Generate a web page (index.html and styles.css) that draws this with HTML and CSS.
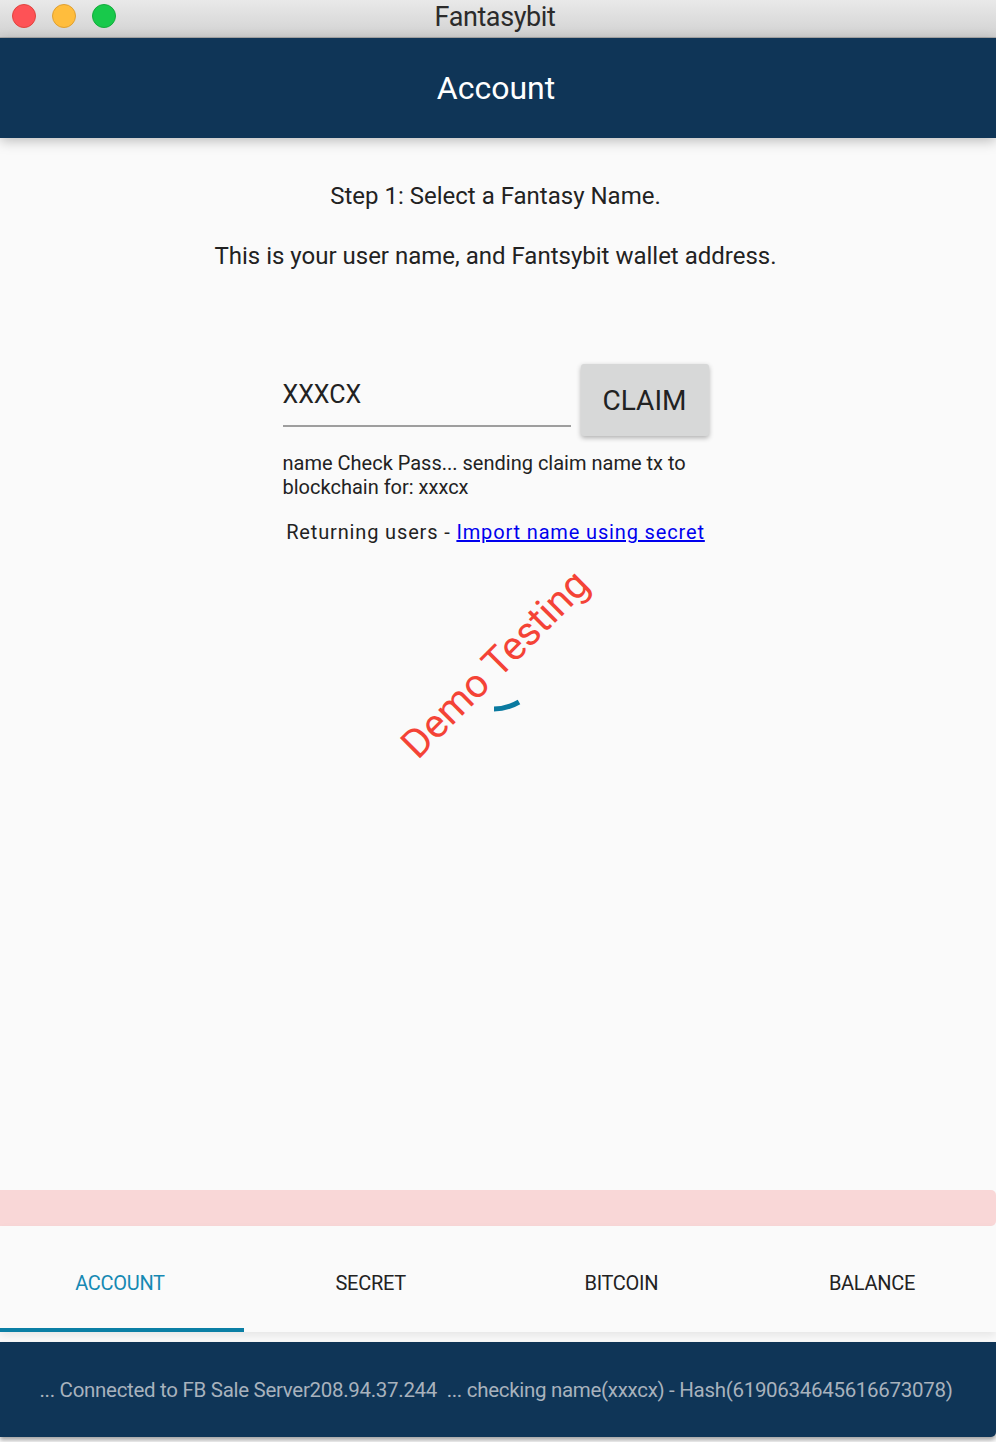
FILE: index.html
```html
<!DOCTYPE html>
<html>
<head>
<meta charset="utf-8">
<title>Fantasybit</title>
<link rel="stylesheet" href="styles.css">
</head>
<body>
<div class="window">
  <div class="titlebar">
    <div class="lights">
      <span class="light red"></span>
      <span class="light yellow"></span>
      <span class="light green"></span>
    </div>
    <div class="title">Fantasybit</div>
  </div>
  <header class="appbar">Account</header>
  <main class="content">
    <p class="step">Step 1: Select a Fantasy Name.</p>
    <p class="lead">This is your user name, and Fantsybit wallet address.</p>
    <div class="form">
      <div class="row">
        <div class="field">XXXCX</div>
        <button class="claim">CLAIM</button>
      </div>
      <p class="msg">name Check Pass... sending claim name tx to blockchain for: xxxcx</p>
      <p class="returning">Returning users - <a href="#">Import name using secret</a></p>
    </div>
    <div class="stage">
      <svg class="spinner" width="40" height="30" viewBox="0 0 40 30">
        <path d="M8 17 Q21 17 33 10" fill="none" stroke="#0a7aa0" stroke-width="5"/>
      </svg>
      <div class="watermark">Demo Testing</div>
    </div>
  </main>
  <div class="alert"></div>
  <nav class="tabs">
    <div class="tab active">ACCOUNT</div>
    <div class="tab">SECRET</div>
    <div class="tab">BITCOIN</div>
    <div class="tab">BALANCE</div>
  </nav>
  <footer class="status">... Connected to FB Sale Server208.94.37.244 &nbsp;... checking name(xxxcx) - Hash(6190634645616673078)</footer>
</div>
</body>
</html>
```
FILE: styles.css
```css
* { box-sizing: border-box; }
html, body { margin: 0; padding: 0; }
body {
  width: 996px;
  height: 1442px;
  overflow: hidden;
  background: #fafafa;
  font-family: Roboto, "Noto Sans", sans-serif;
  color: #222;
}
.window {
  display: flex;
  flex-direction: column;
  height: 1442px;
}
.titlebar {
  height: 38px;
  flex: none;
  background: linear-gradient(#e9e9e9, #d2d2d2);
  border-bottom: 1px solid #ababab;
  position: relative;
  display: flex;
  align-items: center;
  justify-content: center;
}
.lights {
  position: absolute;
  left: 12px;
  top: 4px;
  display: flex;
  gap: 16px;
}
.light {
  width: 24px;
  height: 24px;
  border-radius: 50%;
  display: block;
}
.light.red { background: #fe5256; border: 1px solid #e0443e; }
.light.yellow { background: #ffbd3d; border: 1px solid #dfa032; }
.light.green { background: #18c94b; border: 1px solid #14ac3c; }
.title {
  font-size: 27px;
  color: #2b2b2b;
  letter-spacing: -0.4px;
  padding-bottom: 4px;
  padding-right: 6px;
}
.appbar {
  height: 100px;
  flex: none;
  background: #0f3557;
  color: #fff;
  font-size: 32px;
  display: flex;
  align-items: center;
  justify-content: center;
  padding-right: 4px;
  position: relative;
  z-index: 1;
  box-shadow: 0 3px 12px rgba(0,0,0,0.25);
}
.content {
  flex: 1;
  display: flex;
  flex-direction: column;
  align-items: center;
  padding-top: 45px;
  padding-right: 5px;
}
.content p { margin: 0; }
.step {
  font-size: 24px;
  line-height: 26px;
}
.lead {
  font-size: 24px;
  line-height: 26px;
  margin-top: 34px !important;
}
.form {
  width: 426px;
  margin-top: 95px;
}
.row {
  display: flex;
  gap: 10px;
  align-items: flex-start;
}
.field {
  width: 288px;
  height: 63px;
  border-bottom: 2px solid #9e9e9e;
  font-size: 25px;
  padding-top: 16px;
  color: #222;
}
.claim {
  width: 128px;
  height: 72px;
  border: none;
  border-radius: 3px;
  background: #d7d8d8;
  font-family: Roboto, sans-serif;
  font-size: 28px;
  color: #222;
  box-shadow: 0 2px 5px rgba(0,0,0,0.3);
  padding: 0;
}
.msg {
  margin-top: 15px !important;
  font-size: 20px;
  line-height: 24px;
}
.returning {
  margin-top: 21px !important;
  font-size: 20px;
  line-height: 24px;
  text-align: center;
  letter-spacing: 0.85px;
  white-space: nowrap;
  margin-left: -10px !important;
  margin-right: -10px !important;
}
.returning a { color: #0000ee; }
.stage {
  position: relative;
  width: 996px;
  height: 200px;
}
.spinner {
  position: absolute;
  left: 488px;
  top: 148px;
}
.watermark {
  position: absolute;
  left: 497px;
  top: 120px;
  transform: translate(-50%, -50%) rotate(-45deg);
  color: #f44336;
  font-size: 40px;
  white-space: nowrap;
}
.alert {
  height: 36px;
  flex: none;
  background: #f9d7d7;
  border-radius: 0 5px 5px 0;
}
.tabs {
  height: 106px;
  flex: none;
  display: grid;
  grid-template-columns: repeat(4, 244px);
  column-gap: 6.67px;
  box-shadow: 0 4px 8px rgba(0,0,0,0.08);
  position: relative;
  z-index: 1;
}
.tab {
  display: flex;
  align-items: center;
  justify-content: center;
  font-size: 20px;
  letter-spacing: -0.3px;
  color: #222;
  padding-top: 12px;
  padding-right: 4px;
  border-bottom: 4px solid transparent;
}
.tab.active {
  color: #1689b3;
  border-bottom-color: #0a7fa5;
}
.status {
  margin-top: 10px;
  margin-bottom: 5px;
  height: 95px;
  flex: none;
  background: #0f3557;
  color: #a8b2bd;
  font-size: 20.5px;
  letter-spacing: -0.3px;
  display: flex;
  align-items: center;
  justify-content: center;
  padding-right: 4px;
  border-radius: 0 0 5px 0;
  box-shadow: 0 3px 4px rgba(0,0,0,0.35);
}
```
